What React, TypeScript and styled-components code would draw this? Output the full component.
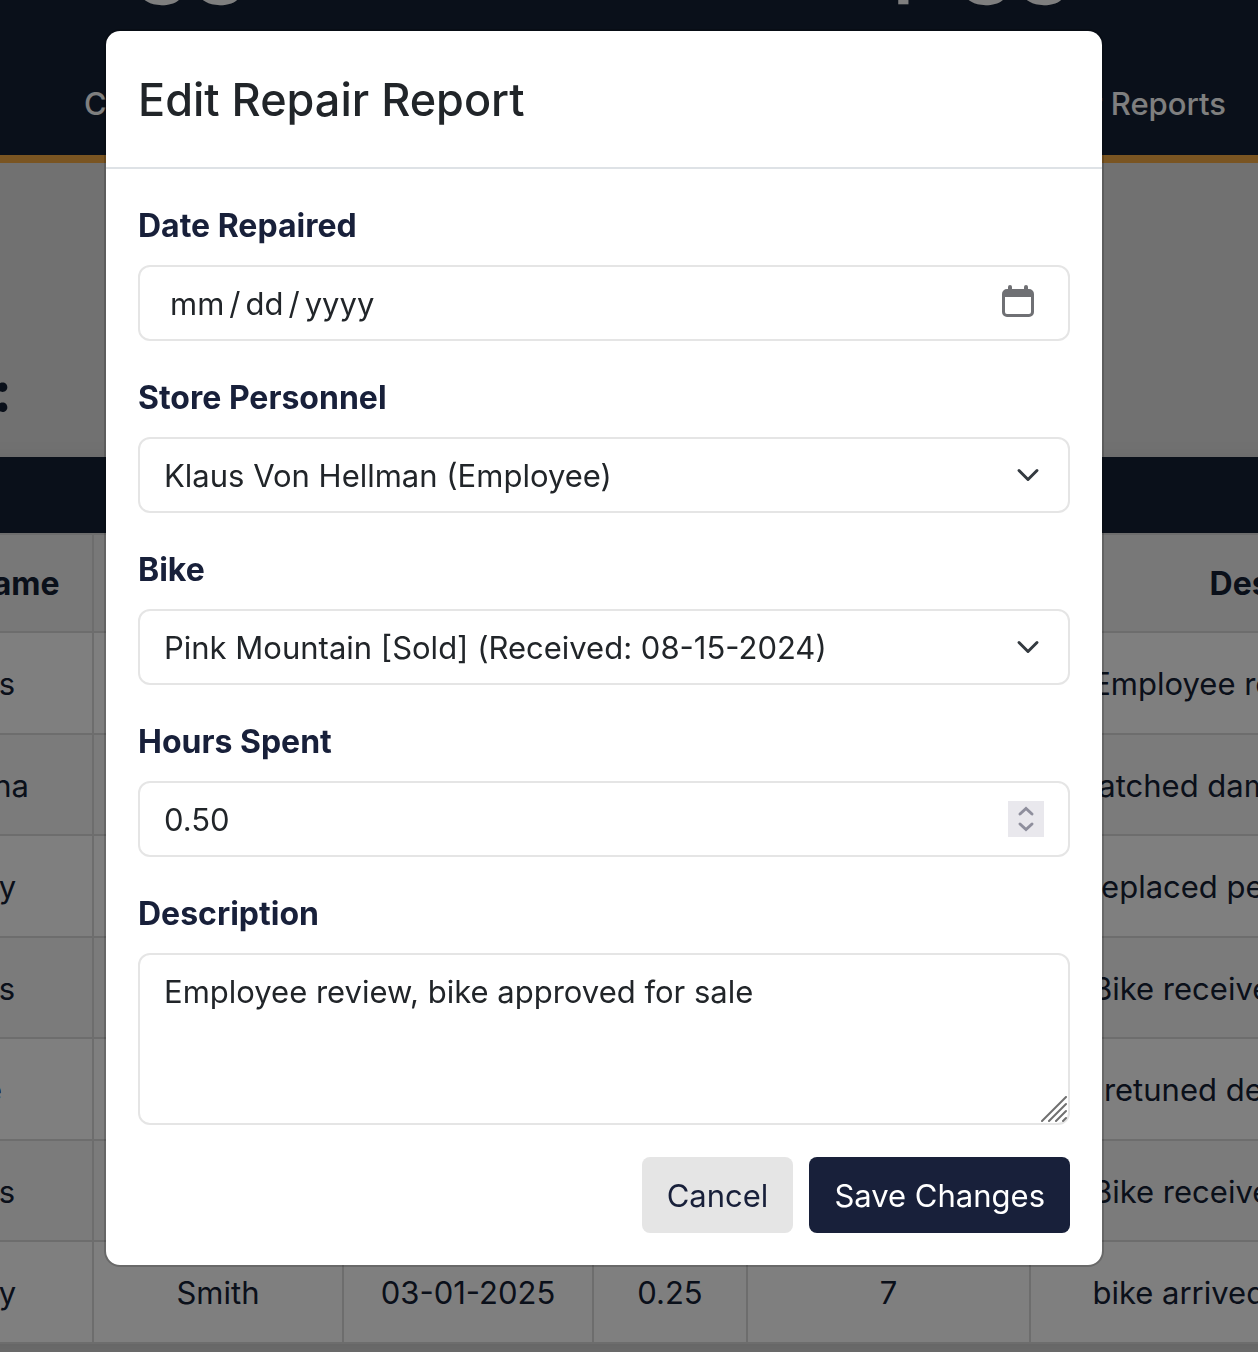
import React from "react";
import styled, { createGlobalStyle } from "styled-components";

const navy = "#18203a";
const navyDeep = "#142034";

const GlobalStyle = createGlobalStyle`
  *, *::before, *::after { box-sizing: border-box; }
  body {
    margin: 0;
    overflow: hidden;
    font-family: Inter, "Liberation Sans", sans-serif;
    font-size: 31px;
    line-height: 48px;
    color: #212529;
  }
`;

const Page = styled.div`
  height: 100vh;
  overflow: hidden;
  background: #e2e2e2;
`;

const SiteHeader = styled.header`
  display: flex;
  flex-direction: column;
  justify-content: flex-end;
  height: 163px;
  overflow: hidden;
  background: ${navyDeep};
  border-bottom: 8px solid #f4aa44;
  color: #ffffff;
`;

const SiteTitle = styled.h1`
  display: flex;
  flex: none;
  justify-content: space-between;
  margin: 0;
  padding: 0 184px 0 48px;
  font-size: 94px;
  font-weight: 500;
  line-height: 112px;
  white-space: nowrap;
`;

const TitleGroup = styled.span`
  display: flex;
  gap: 8px;
`;

const Nav = styled.nav`
  display: flex;
  flex: none;
  justify-content: space-between;
  padding: 73px 32px 27px 84px;
`;

const NavLink = styled.a`
  color: #ffffff;
  font-weight: 500;
  text-decoration: none;
`;

const Main = styled.main`
  width: 1713px;
  margin-left: -142px;
`;

const PageHeading = styled.h2`
  display: flex;
  justify-content: flex-end;
  width: 154px;
  margin: 0;
  padding: 196px 0 34px;
  color: ${navyDeep};
  font-size: 56px;
  font-weight: 700;
  line-height: 64px;
  white-space: nowrap;
`;

const TablePanel = styled.section`
  box-shadow: 0 8px 24px rgba(0, 0, 0, 0.12);
`;

const Banner = styled.div`
  height: 76px;
  background: ${navyDeep};
`;

const Table = styled.table`
  width: 100%;
  table-layout: fixed;
  border-collapse: separate;
  border-spacing: 0;
  color: ${navyDeep};
  text-align: center;
  white-space: nowrap;
`;

const Column = styled.col<{ $width: number }>`
  width: ${(p) => p.$width}px;
`;

const HeadCell = styled.th`
  height: 100px;
  padding: 2px 24px 0;
  background: #f0f0f0;
  border: solid #dadada;
  border-width: 2px 2px 2px 0;
  font-size: 32px;
  font-weight: 700;
`;

const Row = styled.tr`
  height: 102px;
  background: #ffffff;
  &:nth-child(even) {
    height: 101px;
    background: #f7f7f7;
  }
`;

const Cell = styled.td`
  padding: 2px 24px 0;
  border: solid #dadada;
  border-width: 0 2px 2px 0;
`;

const Backdrop = styled.div`
  position: fixed;
  inset: 0;
  display: flex;
  justify-content: center;
  align-items: flex-start;
  padding: 29px 50px 29px 0;
  background: rgba(0, 0, 0, 0.5);
`;

const Dialog = styled.div`
  width: 100%;
  max-width: 1000px;
  background: #ffffff;
  background-clip: padding-box;
  border: 2px solid rgba(0, 0, 0, 0.175);
  border-radius: 16px;
`;

const DialogHeader = styled.div`
  padding: 33px 32px 31px;
  border-bottom: 2px solid #dee2e6;
`;

const DialogTitle = styled.h2`
  margin: 0;
  font-size: 45px;
  font-weight: 500;
  line-height: 72px;
`;

const Form = styled.form`
  display: flex;
  flex-direction: column;
  gap: 32px;
  padding: 32px;
`;

const Field = styled.div`
  display: flex;
  flex-direction: column;
  gap: 14px;
`;

const Label = styled.label`
  color: ${navy};
  font-size: 32px;
  font-weight: 700;
  line-height: 50px;
`;

const ControlBox = styled.div`
  position: relative;
  display: flex;
`;

const controlStyles = `
  display: block;
  width: 100%;
  margin: 0;
  padding: 13px 24px 11px;
  background: #ffffff;
  border: 2px solid #e5e5e5;
  border-radius: 12px;
  color: #212529;
  font: inherit;
  appearance: none;
  outline: none;
`;

const Input = styled.input`
  ${controlStyles}
  height: 76px;
  padding: 12px 24px;
  appearance: textfield;
  &::-webkit-inner-spin-button { appearance: none; margin: 0; }
`;

const DateInput = styled.input`
  ${controlStyles}
  height: 76px;
  padding-left: 29px;
  &::-webkit-datetime-edit-fields-wrapper { padding: 0; }
  &::-webkit-datetime-edit-text { padding: 0 4px; }
  &::-webkit-calendar-picker-indicator { opacity: 0; width: 36px; height: 36px; }
`;

const Select = styled.select`
  ${controlStyles}
  height: 76px;
`;

const TextArea = styled.textarea`
  ${controlStyles}
  height: 172px;
  resize: none;
`;

const Adornment = styled.svg<{ $right: number }>`
  position: absolute;
  right: ${(p) => p.$right}px;
  top: 0;
  bottom: 0;
  margin: auto 0;
  pointer-events: none;
`;

const ResizeGrip = styled.svg`
  position: absolute;
  right: 3px;
  bottom: 3px;
  pointer-events: none;
`;

const Actions = styled.div`
  display: flex;
  justify-content: flex-end;
  gap: 16px;
`;

const Button = styled.button<{ $primary?: boolean }>`
  height: 76px;
  padding: 2px 25px 0;
  border: 0;
  border-radius: 8px;
  background: ${(p) => (p.$primary ? navy : "#e5e5e5")};
  color: ${(p) => (p.$primary ? "#ffffff" : navy)};
  font: inherit;
`;

const Chevron = () => (
  <Adornment $right={30} width="24" height="24" viewBox="0 0 24 24" fill="none" aria-hidden="true">
    <path d="M3 7.5l9 9 9-9" stroke="#343a40" strokeWidth="3" strokeLinecap="round" strokeLinejoin="round" />
  </Adornment>
);

const columns = [
  { name: "First Name", width: 236 },
  { name: "Last Name", width: 250 },
  { name: "Date", width: 250 },
  { name: "Hours", width: 154 },
  { name: "Bike", width: 283 },
  { name: "Description", width: 540 },
];

const rows = [
  ["Klaus", "Von Hellman", "08-16-2024", "0.50", "1", "Employee review, bike app..."],
  ["Joanna", "Miller", "09-02-2024", "1.00", "2", "Patched damaged front tires..."],
  ["Harry", "Smith", "10-11-2024", "0.75", "3", "Replaced pedals and chains..."],
  ["Klaus", "Von Hellman", "11-20-2024", "0.50", "4", "Bike received, ready for sale"],
  ["Joe", "Baker", "01-09-2025", "1.25", "5", "retuned derailleur, tested..."],
  ["Klaus", "Von Hellman", "02-14-2025", "0.50", "6", "Bike received, ready for sale"],
  ["Harry", "Smith", "03-01-2025", "0.25", "7", "bike arrived in decent shape"],
];

export default function App() {
  return (
    <>
      <GlobalStyle />
      <Page>
        <SiteHeader>
          <SiteTitle>
            <span>Bigg</span>
            <TitleGroup>
              <span>Up</span>
              <span>gg</span>
            </TitleGroup>
          </SiteTitle>
          <Nav>
            <NavLink href="#customers">Customers</NavLink>
            <NavLink href="#reports">Repair Reports</NavLink>
          </Nav>
        </SiteHeader>
        <Main>
          <PageHeading>Repair Reports:</PageHeading>
          <TablePanel>
            <Banner />
            <Table>
              <colgroup>
                {columns.map((c) => <Column key={c.name} $width={c.width} />)}
              </colgroup>
              <thead>
                <tr>{columns.map((c) => <HeadCell key={c.name} scope="col">{c.name}</HeadCell>)}</tr>
              </thead>
              <tbody>
                {rows.map((row) => (
                  <Row key={row[4]}>{row.map((value, i) => <Cell key={i}>{value}</Cell>)}</Row>
                ))}
              </tbody>
            </Table>
          </TablePanel>
        </Main>
      </Page>

      <Backdrop>
        <Dialog role="dialog" aria-modal="true" aria-labelledby="dialog-title">
          <DialogHeader>
            <DialogTitle id="dialog-title">Edit Repair Report</DialogTitle>
          </DialogHeader>
          <Form onSubmit={(e) => e.preventDefault()}>
            <Field>
              <Label htmlFor="date">Date Repaired</Label>
              <ControlBox>
                <DateInput id="date" type="date" />
                <Adornment $right={35} width="34" height="36" viewBox="0 0 34 36" aria-hidden="true">
                  <path
                    fill="#6f7074"
                    fillRule="evenodd"
                    d="M7 2a2 2 0 0 1 4 0v2h12V2a2 2 0 0 1 4 0v2h1a5 5 0 0 1 5 5v18a5 5 0 0 1-5 5H6a5 5 0 0 1-5-5V9a5 5 0 0 1 5-5h1zM4 12v15a2 2 0 0 0 2 2h22a2 2 0 0 0 2-2V12z"
                  />
                </Adornment>
              </ControlBox>
            </Field>
            <Field>
              <Label htmlFor="personnel">Store Personnel</Label>
              <ControlBox>
                <Select id="personnel"><option>Klaus Von Hellman (Employee)</option></Select>
                <Chevron />
              </ControlBox>
            </Field>
            <Field>
              <Label htmlFor="bike">Bike</Label>
              <ControlBox>
                <Select id="bike"><option>Pink Mountain [Sold] (Received: 08-15-2024)</option></Select>
                <Chevron />
              </ControlBox>
            </Field>
            <Field>
              <Label htmlFor="hours">Hours Spent</Label>
              <ControlBox>
                <Input id="hours" type="number" step="0.01" defaultValue="0.50" />
                <Adornment $right={26} width="36" height="36" viewBox="0 0 36 36" fill="none" aria-hidden="true">
                  <rect width="36" height="36" fill="#e9e8ed" />
                  <path d="M12 13l6-5.500 6 5.500M12 23l6 5.500 6-5.500" stroke="#8f8f9d" strokeWidth="3" strokeLinecap="round" />
                </Adornment>
              </ControlBox>
            </Field>
            <Field>
              <Label htmlFor="description">Description</Label>
              <ControlBox>
                <TextArea id="description" defaultValue="Employee review, bike approved for sale" />
                <ResizeGrip width="26" height="26" viewBox="0 0 26 26" aria-hidden="true">
                  <path d="M1 25L25 1M8 25L25 8M15 25L25 15M22 25L25 22" stroke="#707070" strokeWidth="2" strokeLinecap="round" />
                </ResizeGrip>
              </ControlBox>
            </Field>
            <Actions>
              <Button type="button">Cancel</Button>
              <Button type="submit" $primary>Save Changes</Button>
            </Actions>
          </Form>
        </Dialog>
      </Backdrop>
    </>
  );
}
